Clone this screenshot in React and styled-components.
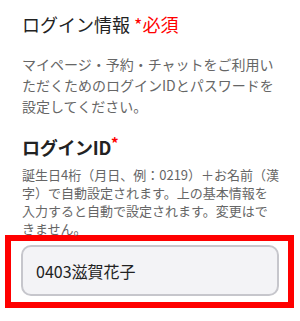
import React from 'react';
import styled, { createGlobalStyle } from 'styled-components';

const GlobalStyle = createGlobalStyle`
    html, body {
        margin: 0;
        padding: 0;
        background: #ffffff;
    }
    body {
        font-family: "Noto Sans CJK JP", "Noto Sans", sans-serif;
        color: #222222;
    }
`;

const Page = styled.div`
    width: 300px;
    box-sizing: border-box;
    padding: 11px 0 12px 22px;
`;

const Content = styled.div`
    width: 258px;
`;

const SectionTitle = styled.h2`
    margin: 0;
    font-size: 18px;
    line-height: 26px;
    font-weight: 400;
    color: #222222;
`;

const Required = styled.span`
    color: #ff0000;
`;

const Lead = styled.p`
    margin: 17px 0 0;
    font-size: 14px;
    line-height: 21px;
    color: #666666;
`;

const FieldLabel = styled.h3`
    margin: 17px 0 0;
    font-size: 18px;
    line-height: 26px;
    font-weight: 700;
    color: #222222;
    letter-spacing: -0.3px;
`;

const Mark = styled.span`
    color: #ff0000;
    font-size: 15px;
    vertical-align: top;
    line-height: 18px;
`;

const Help = styled.p`
    margin: 6px 0 0;
    font-size: 13px;
    line-height: 18px;
    color: #666666;
`;

/* red annotation frame round the field */
const Highlight = styled.div`
    width: 258px;
    margin: -3px 0 0 -17px;
    padding: 4px 9px 6px 10px;
    border: 6px solid #ff0000;
`;

const TextInput = styled.input`
    display: block;
    width: 100%;
    height: 51px;
    box-sizing: border-box;
    padding: 0 13px;
    border: 2px solid #c6c6cc;
    border-radius: 10px;
    background: #f3f3f6;
    font-family: "Noto Sans CJK JP", "Noto Sans", sans-serif;
    font-size: 16px;
    color: #222222;
    outline: none;
`;

export default function App() {
    return (
        <>
            <GlobalStyle />
            <Page>
                <Content>
                    <SectionTitle>
                        ログイン情報 <Required>*必須</Required>
                    </SectionTitle>
                    <Lead>
                        マイページ・予約・チャットをご利用いただくためのログインIDとパスワードを設定してください。
                    </Lead>
                    <FieldLabel>
                        ログインID<Mark>*</Mark>
                    </FieldLabel>
                    <Help>
                        誕生日4桁（月日、例：0219）＋お名前（漢字）で自動設定されます。上の基本情報を入力すると自動で設定されます。変更はできません。
                    </Help>
                    <Highlight>
                        <TextInput readOnly value="0403滋賀花子" />
                    </Highlight>
                </Content>
            </Page>
        </>
    );
}
